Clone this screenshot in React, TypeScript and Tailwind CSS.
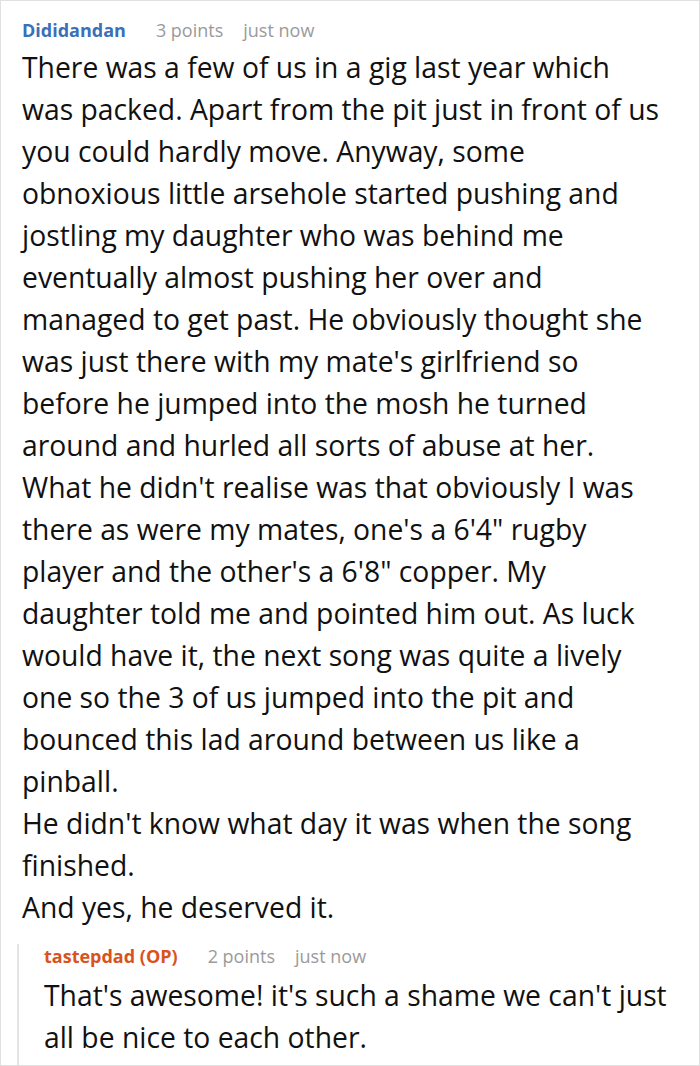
export default function App() {
  const lines = [
    "There was a few of us in a gig last year which was packed. Apart from the pit just in front of us you could hardly move. Anyway, some obnoxious little arsehole started pushing and jostling my daughter who was behind me eventually almost pushing her over and managed to get past. He obviously thought she was just there with my mate's girlfriend so before he jumped into the mosh he turned around and hurled all sorts of abuse at her.",
    "What he didn't realise was that obviously I was there as were my mates, one's a 6'4\" rugby player and the other's a 6'8\" copper. My daughter told me and pointed him out. As luck would have it, the next song was quite a lively one so the 3 of us jumped into the pit and bounced this lad around between us like a pinball.",
    "He didn't know what day it was when the song finished.",
    "And yes, he deserved it.",
  ];
  return (
    <div className="w-[700px] h-[1066px] bg-white border border-[#e0e0e0] overflow-hidden" style={{ fontFamily: '"Open Sans", "Noto Sans", sans-serif' }}>
      <div className="pl-[21px] pr-[36px] pt-[17px]">
        <div className="flex items-baseline gap-[30px] text-[18px] leading-[24px]">
          <span className="font-bold text-[#3b6fb6]">Dididandan</span>
          <span className="flex gap-[20px] text-[#9a9a9a]">
            <span>3 points</span>
            <span>just now</span>
          </span>
        </div>
        <div className="mt-[4px] text-[28.3px] leading-[42px] text-[#111]">
          {lines.map((l, i) => (
            <p key={i}>{l}</p>
          ))}
        </div>
        <div className="mt-[16px] ml-[-5px] mr-[-24px] border-l-2 border-[#e4e4e4] pl-[25px] pb-[10px]">
          <div className="flex items-baseline gap-[30px] text-[18px] leading-[24px]">
            <span className="font-bold text-[#d9531e]">tastepdad (OP)</span>
            <span className="flex gap-[20px] text-[#9a9a9a]">
              <span>2 points</span>
              <span>just now</span>
            </span>
          </div>
          <p className="mt-[6px] text-[28.3px] leading-[42px] text-[#111]">
            That's awesome! it's such a shame we can't just all be nice to each other.
          </p>
        </div>
      </div>
    </div>
  );
}
